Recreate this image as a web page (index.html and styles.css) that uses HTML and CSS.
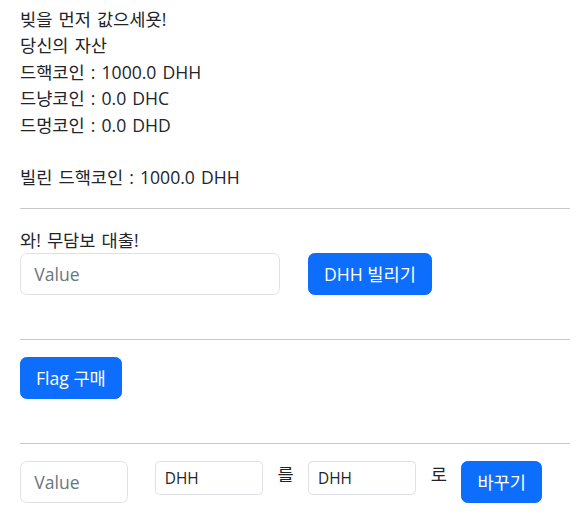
FILE: index.html
```html
<!DOCTYPE html>
<html lang="ko">
<head>
<meta charset="utf-8">
<title>드핵코인</title>
<link rel="stylesheet" href="styles.css">
</head>
<body>
<main class="page">
  <div class="info">
    <div class="line">빚을 먼저 값으세욧!</div>
    <div class="line">당신의 자산</div>
    <div class="line">드핵코인 : 1000.0 DHH</div>
    <div class="line">드냥코인 : 0.0 DHC</div>
    <div class="line">드멍코인 : 0.0 DHD</div>
    <div class="line blank"></div>
    <div class="line">빌린 드핵코인 : 1000.0 DHH</div>
  </div>
  <hr class="rule">
  <section class="block">
    <div class="line">와! 무담보 대출!</div>
    <div class="loan-row">
      <input class="field field-loan" type="text" placeholder="Value">
      <button class="btn btn-loan" type="button">DHH 빌리기</button>
    </div>
  </section>
  <hr class="rule">
  <section class="block">
    <button class="btn" type="button">Flag 구매</button>
  </section>
  <hr class="rule">
  <section class="swap-row">
    <input class="field field-swap" type="text" placeholder="Value">
    <select class="pick pick-first">
      <option>DHH</option>
      <option>DHC</option>
      <option>DHD</option>
    </select>
    <span class="word">를</span>
    <select class="pick">
      <option>DHH</option>
      <option>DHC</option>
      <option>DHD</option>
    </select>
    <span class="word">로</span>
    <button class="btn" type="button">바꾸기</button>
  </section>
</main>
</body>
</html>
```

FILE: styles.css
```css
* {
  box-sizing: border-box;
}

html, body {
  margin: 0;
  background: #ffffff;
}

body {
  font-family: "Open Sans", "Noto Sans CJK KR", sans-serif;
  font-size: 17.6px;
  line-height: 26.4px;
  color: #212529;
}

.page {
  padding: 6px 16px 0 20px;
}

.line {
  height: 26.4px;
  line-height: 26.4px;
  white-space: nowrap;
  word-spacing: 1.5px;
}

.rule {
  margin: 17.6px 0;
  border: 0;
  border-top: 1px solid #c8c9ca;
  height: 0;
}

.block {
  padding-bottom: 26.4px;
}

.loan-row {
  display: flex;
  align-items: flex-start;
}

.field {
  font-family: inherit;
  font-size: 17.6px;
  line-height: 26.4px;
  height: 41.4px;
  padding: 6.6px 13.2px;
  color: #212529;
  background: #ffffff;
  border: 1px solid #dee2e6;
  border-radius: 6.6px;
  outline: none;
  margin: 0;
}

.field::placeholder {
  color: #6c757d;
  opacity: 1;
}

.field-loan {
  width: 260px;
}

.field-swap {
  width: 108px;
}

.btn {
  font-family: inherit;
  font-size: 17.6px;
  line-height: 26.4px;
  height: 41.4px;
  padding: 6.6px 15px;
  color: #ffffff;
  background: #0d6efd;
  border: 1px solid #0d6efd;
  border-radius: 6.6px;
  margin: 0;
  white-space: nowrap;
  cursor: pointer;
}

.btn-loan {
  margin-left: 28px;
}

.swap-row {
  display: flex;
  align-items: flex-start;
}

.pick {
  appearance: none;
  -webkit-appearance: none;
  font-family: inherit;
  font-size: 15.4px;
  line-height: 23px;
  height: 33.5px;
  width: 108px;
  padding: 4.4px 8.8px;
  color: #212529;
  background: #ffffff;
  border: 1px solid #dee2e6;
  border-radius: 4.4px;
  margin: 0;
  outline: none;
}

.pick-first {
  margin-left: 27px;
}

.word {
  line-height: 26.4px;
  margin: 0 14.5px;
  white-space: nowrap;
}
```
